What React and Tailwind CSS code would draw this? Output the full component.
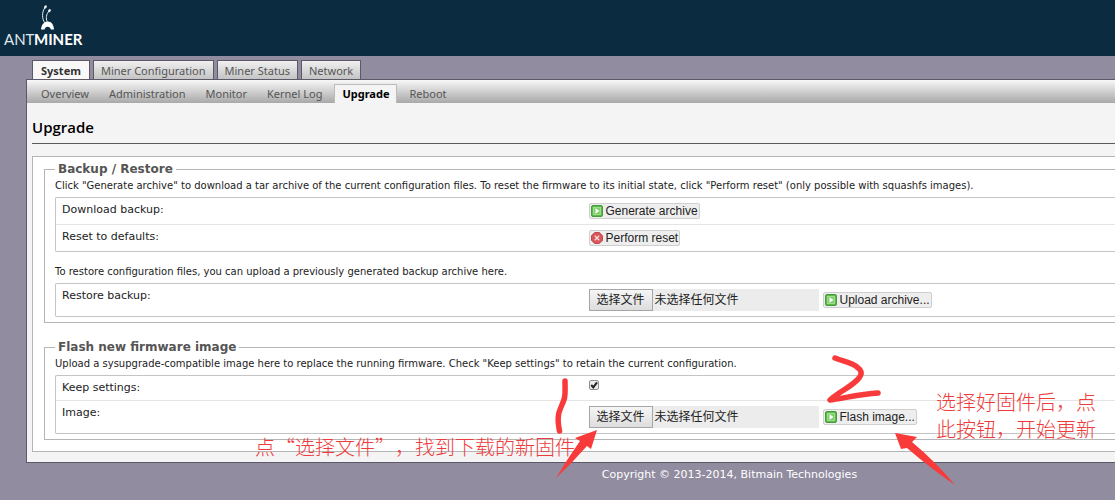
/**
 * Antminer firmware upgrade page
 * Annotated with the two steps of a firmware update
 */

const TABS = ['System', 'Miner Configuration', 'Miner Status', 'Network']

const SUB_TABS = ['Overview', 'Administration', 'Monitor', 'Kernel Log', 'Upgrade', 'Reboot']

function Logo() {
  return (
    <a href="#" aria-label="AntMiner" className="block">
      <svg width="90" height="52" viewBox="0 0 90 52" fill="none">
        <g stroke="#e6eef2" strokeLinecap="round">
          <path d="M44.500 22.500C42 19 41.500 12 45 7.500" strokeWidth="1" />
          <path d="M47 21.500C45.800 18 46 14.500 49 11" strokeWidth="1" />
          <path d="M45.200 7.200L45.700 6.500M49.200 11L49.700 10.300" strokeWidth="2.400" />
        </g>
        <path d="M41 29.500C41.500 24.500 44 21.500 47.800 21.500C51.500 21.500 53.800 24.800 54 29.500H50.800C50.500 27.800 49.300 26.800 47.700 26.800C46 26.800 45 27.800 44.600 29.500Z" fill="#fff" />
        <text x="4" y="45" fill="#dfe7ec" fontSize="15" fontFamily="Lato, sans-serif">ANT</text>
        <text x="34" y="45" fill="#fff" fontSize="15" fontWeight="700" fontFamily="Lato, sans-serif">MINER</text>
      </svg>
    </a>
  )
}

function PlayIcon() {
  return (
    <svg width="12" height="12" viewBox="0 0 12 12" className="shrink-0">
      <rect x="0.500" y="0.500" width="11" height="11" rx="1.500" fill="#5cb84a" stroke="#4a9a3e" />
      <rect x="2.500" y="2.500" width="7" height="7" fill="#7fd06c" stroke="#a9e39b" strokeWidth="0.800" />
      <path d="M4.500 3.200L8.500 6L4.500 8.800Z" fill="#fff" />
    </svg>
  )
}

function ResetIcon() {
  return (
    <svg width="12" height="12" viewBox="0 0 12 12" className="shrink-0">
      <path d="M3.700 0.500H8.300L11.500 3.700V8.300L8.300 11.500H3.700L0.500 8.300V3.700Z" fill="#d9575a" stroke="#c04a4d" />
      <path d="M3.800 3.800L8.200 8.200M8.200 3.800L3.800 8.200" stroke="#fbdcdc" strokeWidth="1.300" />
    </svg>
  )
}

function ActionButton({ icon, children }) {
  return (
    <button
      type="button"
      className="flex h-4 items-center gap-[3px] rounded-xs border border-[#cfcfcf] bg-[#eeeeee] px-px font-['Liberation_Sans',sans-serif] text-xs whitespace-nowrap text-[#222]"
    >
      {icon}
      {children}
    </button>
  )
}

// The native file input stays hidden, the visible part is its label
function FilePicker({ id }) {
  return (
    <div className="flex h-[22px] w-[230px] items-center bg-[#ececec] font-['Liberation_Sans','Noto_Sans_CJK_SC',sans-serif] text-xs text-[#222]">
      <input id={id} type="file" className="sr-only" />
      <label
        htmlFor={id}
        className="flex h-full w-16 items-center justify-center border border-[#a6a6a6] bg-linear-to-b from-[#f6f6f6] to-[#dddddd]"
      >
        选择文件
      </label>
      <span className="pl-0.5">未选择任何文件</span>
    </div>
  )
}

function Section({ title, children }) {
  return (
    <fieldset className="border border-r-0 border-[#b5b5b5] pb-[5px] pl-2.5">
      <legend className="px-[3px] text-xs leading-4 font-bold text-[#555]">{title}</legend>
      {children}
    </fieldset>
  )
}

function Description({ children }) {
  return <p className="py-px text-[10px] leading-4 whitespace-nowrap text-[#222]">{children}</p>
}

function Rows({ children }) {
  return (
    <div className="mt-0.5 divide-y divide-[#e4e4e4] rounded-l-xs border border-r-0 border-[#c4c4c4]">
      {children}
    </div>
  )
}

function Row({ label, htmlFor, children }) {
  return (
    <div className="grid grid-cols-2 items-start py-1 pl-1.5 text-[11px] leading-4 text-[#222]">
      {htmlFor ? <label htmlFor={htmlFor}>{label}</label> : <span>{label}</span>}
      {children}
    </div>
  )
}

function Annotations() {
  return (
    <div className="pointer-events-none absolute inset-0 overflow-hidden font-['Noto_Sans_CJK_SC',serif] text-xl leading-[27px] font-light text-[#ee3b3b] [text-spacing-trim:space-all]">
      <p className="absolute top-[433px] left-[255px] whitespace-nowrap">点“选择文件”，找到下载的新固件</p>
      <p className="absolute top-[388px] left-[936px] whitespace-nowrap">
        选择好固件后，点
        <br />
        此按钮，开始更新
      </p>
      <svg width="1115" height="500" viewBox="0 0 1115 500" className="absolute top-0 left-0" fill="none">
        <g stroke="#f93a3a" strokeWidth="5.500" strokeLinecap="round" strokeLinejoin="round">
          <path d="M565 381C565 386 565.500 393 564.500 398C563 404 559 410 558.500 415C557.500 421 558.500 426 559.500 431" />
          <path d="M835 358C842 361 853 363 857 367C861 370 863 373 859 378C853 386 840 391 830 400C840 399 860 394 878 393" />
        </g>
        <g fill="#f93a3a">
          <path d="M597 430L591 449L587 446Q572 463 556 478Q568 458 580 441L575 438Z" />
          <path d="M895 433L917 437L912 442Q936 462 955 485Q930 468 907 448L901 449Z" />
        </g>
      </svg>
    </div>
  )
}

export default function App() {
  return (
    <div className="relative min-h-screen bg-[#918c9f] font-['DejaVu_Sans',Verdana,sans-serif]">
      <header className="h-14 bg-[#0b2c40]">
        <Logo />
      </header>

      {/* Main tabs */}
      <nav className="flex gap-[3px] pt-1 pl-8 font-['Noto_Sans',sans-serif] text-[11px]">
        {TABS.map(tab => (
          <a
            key={tab}
            href="#"
            className={
              tab === 'System'
                ? 'border border-b-0 border-[#5d5866] bg-[#f8f8f8] px-2 pt-0.5 leading-4 font-bold text-[#333]'
                : 'border border-b-0 border-[#5d5866] bg-linear-to-b from-[#f0f0f0] to-[#c4c4c4] px-[7px] pt-0.5 leading-4 text-[#555]'
            }
          >
            {tab}
          </a>
        ))}
      </nav>

      <main className="ml-[26px] border border-t-0 border-r-0 border-[#5d5866] bg-[#f4f4f4]">
        {/* Sub tabs */}
        <nav className="flex items-end border-t border-[#5d5866] bg-linear-to-b from-[#f8f8f8] to-[#a9a9a9] pt-1 pl-1 font-['Noto_Sans',sans-serif] text-[11px] leading-[18px]">
          {SUB_TABS.map(tab => (
            <a
              key={tab}
              href="#"
              className={
                tab === 'Upgrade'
                  ? 'mx-0.5 border border-b-0 border-[#bbb] bg-[#f4f4f4] px-[7px] font-bold text-black'
                  : 'px-2.5 text-[#555]'
              }
            >
              {tab}
            </a>
          ))}
        </nav>

        <div className="pb-2.5 pl-[5px]">
          <h1 className="border-b border-[#5a5a5a] pt-3 pb-1 font-['Open_Sans',sans-serif] text-[15px] leading-6 font-semibold text-black">
            Upgrade
          </h1>

          <form className="mt-3 flex flex-col gap-4 border border-r-0 border-[#b5b5b5] bg-white pt-1 pb-[11px] pl-[11px]">
            <Section title="Backup / Restore">
              <Description>
                Click "Generate archive" to download a tar archive of the current configuration files. To reset the
                firmware to its initial state, click "Perform reset" (only possible with squashfs images).
              </Description>
              <Rows>
                <Row label="Download backup:">
                  <div className="flex h-[18px] items-center">
                    <ActionButton icon={<PlayIcon />}>Generate archive</ActionButton>
                  </div>
                </Row>
                <Row label="Reset to defaults:">
                  <div className="flex h-[18px] items-center">
                    <ActionButton icon={<ResetIcon />}>Perform reset</ActionButton>
                  </div>
                </Row>
              </Rows>
              <div className="mt-[11px]">
                <Description>
                  To restore configuration files, you can upload a previously generated backup archive here.
                </Description>
              </div>
              <Rows>
                <Row label="Restore backup:" htmlFor="archive">
                  <div className="flex h-6 items-center gap-1">
                    <FilePicker id="archive" />
                    <ActionButton icon={<PlayIcon />}>Upload archive...</ActionButton>
                  </div>
                </Row>
              </Rows>
            </Section>

            <Section title="Flash new firmware image">
              <Description>
                Upload a sysupgrade-compatible image here to replace the running firmware. Check "Keep settings" to
                retain the current configuration.
              </Description>
              <Rows>
                <Row label="Keep settings:" htmlFor="keep">
                  <span className="relative flex size-2.5">
                    <input
                      id="keep"
                      type="checkbox"
                      defaultChecked
                      className="peer size-2.5 appearance-none rounded-xs border border-[#8f8f8f] bg-[#ececec]"
                    />
                    <svg viewBox="0 0 10 10" className="pointer-events-none absolute inset-0 hidden peer-checked:block">
                      <path d="M2.200 5L4.300 7.400L8 2.400" fill="none" stroke="#222" strokeWidth="2" />
                    </svg>
                  </span>
                </Row>
                <Row label="Image:" htmlFor="image">
                  <div className="flex h-6 items-center gap-1">
                    <FilePicker id="image" />
                    <ActionButton icon={<PlayIcon />}>Flash image...</ActionButton>
                  </div>
                </Row>
              </Rows>
            </Section>
          </form>
        </div>
      </main>

      <footer className="pt-1 pl-[344px] text-center text-[11px] leading-4 text-white">
        Copyright © 2013-2014, Bitmain Technologies
      </footer>

      <Annotations />
    </div>
  )
}
